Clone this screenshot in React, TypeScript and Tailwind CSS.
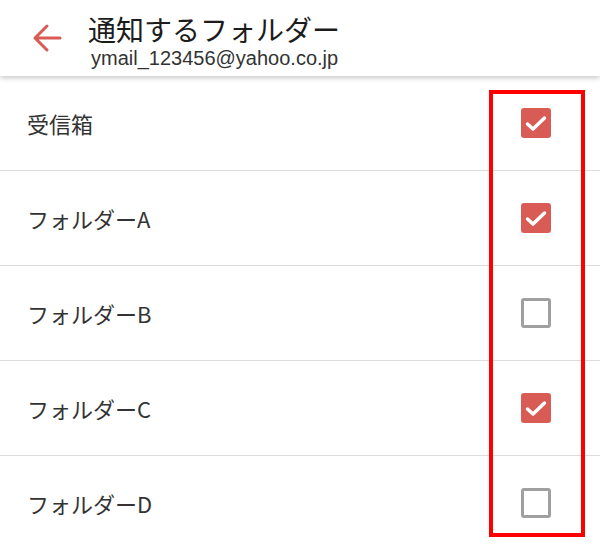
import React from 'react';

// Folder notification settings screen

const folders = [
  { name: '受信箱', checked: true },
  { name: 'フォルダーA', checked: true },
  { name: 'フォルダーB', checked: false },
  { name: 'フォルダーC', checked: true },
  { name: 'フォルダーD', checked: false },
];

const CheckBox: React.FC<{ checked: boolean }> = ({ checked }) =>
  checked ? (
    <div className="w-[30px] h-[30px] rounded-[3px] bg-[#d95b55] flex items-center justify-center">
      <svg width="30" height="30" viewBox="0 0 30 30" fill="none">
        <path d="M6.5 16 L12 21 L23.5 10" stroke="white" strokeWidth="3.5" strokeLinecap="round" strokeLinejoin="round" />
      </svg>
    </div>
  ) : (
    <div className="w-[30px] h-[30px] rounded-[3px] border-[3px] border-[#a0a0a0] bg-white" />
  );

export default function App() {
  return (
    <div
      className="w-[600px] h-[549px] overflow-hidden bg-white relative"
      style={{ fontFamily: '"Noto Sans CJK JP", "Noto Sans", sans-serif' }}
    >
      {/* header */}
      <div className="h-[76px] flex items-center bg-white shadow-[0_2px_5px_rgba(0,0,0,0.22)] relative z-10">
        <div className="w-[88px] flex pl-[32px]">
          <svg width="30" height="30" viewBox="0 0 30 30" fill="none">
            <path d="M28 15 H3 M15 3 L3 15 L15 27" stroke="#d95b55" strokeWidth="3" strokeLinecap="round" strokeLinejoin="round" />
          </svg>
        </div>
        <div className="flex flex-col mt-[4px]">
          <div className="text-[28px] leading-[36px] text-[#1c1c1c]">通知するフォルダー</div>
          <div
            className="text-[20px] leading-[22px] text-[#333] pl-[3px]"
            style={{ fontFamily: '"Liberation Sans", Arial, sans-serif' }}
          >
            ymail_123456@yahoo.co.jp
          </div>
        </div>
      </div>

      {/* folder list */}
      <div className="flex flex-col">
        {folders.map((f, i) => (
          <div key={i} className="h-[95px] shrink-0 flex items-center border-b border-[#dcdcdc]">
            <div className="flex-1 pl-[27px] text-[22px] text-[#333]">{f.name}</div>
            <div className="w-[126px] flex justify-center pr-[2px]">
              <CheckBox checked={f.checked} />
            </div>
          </div>
        ))}
      </div>

      {/* highlight frame */}
      <div className="absolute left-[489px] top-[90px] w-[96px] h-[447px] border-[4px] border-[#ff0000] pointer-events-none z-20" />
    </div>
  );
}
